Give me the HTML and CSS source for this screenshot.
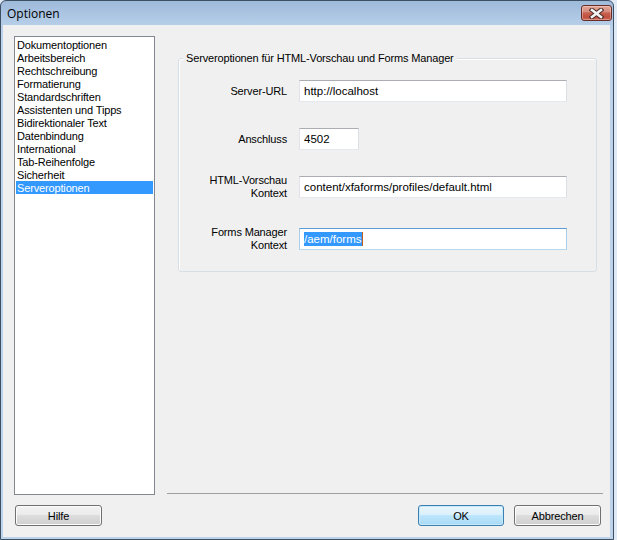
FILE: index.html
```html
<!DOCTYPE html>
<html lang="de">
<head>
    <meta charset="UTF-8">
    <title>Optionen</title>
    <link rel="stylesheet" href="styles.css">
</head>
<body>
    <div class="window">
        <div class="titlebar">
            <span class="title">Optionen</span>
            <button class="close-btn">
                <svg width="15" height="11" viewBox="0 0 15 11">
                    <path d="M3 2 L12 9 M12 2 L3 9" stroke="#4a2a26" stroke-width="4.6" stroke-linecap="square" fill="none"/>
                    <path d="M3 2 L12 9 M12 2 L3 9" stroke="#f4f4f4" stroke-width="2.6" stroke-linecap="square" fill="none"/>
                </svg>
            </button>
        </div>
        <div class="client">
            <div class="main">
                <ul class="category-list">
                    <li>Dokumentoptionen</li>
                    <li>Arbeitsbereich</li>
                    <li>Rechtschreibung</li>
                    <li>Formatierung</li>
                    <li>Standardschriften</li>
                    <li>Assistenten und Tipps</li>
                    <li>Bidirektionaler Text</li>
                    <li>Datenbindung</li>
                    <li>International</li>
                    <li>Tab-Reihenfolge</li>
                    <li>Sicherheit</li>
                    <li class="selected">Serveroptionen</li>
                </ul>
                <div class="panel">
                    <div class="group">
                        <span class="group-title">Serveroptionen für HTML-Vorschau und Forms Manager</span>
                        <div class="form-list">
                            <div class="form-row">
                                <label class="field-label">Server-URL</label>
                                <div class="field">http://localhost</div>
                            </div>
                            <div class="form-row">
                                <label class="field-label">Anschluss</label>
                                <div class="field short">4502</div>
                            </div>
                            <div class="form-row">
                                <label class="field-label">HTML-Vorschau<br>Kontext</label>
                                <div class="field">content/xfaforms/profiles/default.html</div>
                            </div>
                            <div class="form-row spaced">
                                <label class="field-label">Forms Manager<br>Kontext</label>
                                <div class="field focused"><span class="selection">/aem/forms</span><span class="caret"></span></div>
                            </div>
                        </div>
                    </div>
                    <div class="separator"></div>
                </div>
            </div>
            <div class="button-row">
                <button class="btn help-btn">Hilfe</button>
                <button class="btn default-btn">OK</button>
                <button class="btn cancel-btn">Abbrechen</button>
            </div>
        </div>
    </div>
</body>
</html>
```

FILE: styles.css
```css
body {
    margin: 0;
    background: #dfeaf6;
    font-family: "Liberation Sans", Arial, sans-serif;
    font-size: 11px;
    letter-spacing: -0.15px;
    color: #000;
}
.window {
    width: 614px;
    height: 540px;
    box-sizing: border-box;
    border: 1px solid #3d4f63;
    border-radius: 6px 6px 0 0;
    background: linear-gradient(#9ebada, #b6cee8 24px, #bcd3eb 30px, #bcd3eb);
    display: flex;
    flex-direction: column;
}
.titlebar {
    height: 24px;
    display: flex;
    justify-content: space-between;
    align-items: flex-start;
}
.title {
    font-family: "Open Sans", "Liberation Sans", sans-serif;
    font-size: 12px;
    letter-spacing: 0;
    line-height: 17px;
    padding: 4px 0 0 6px;
}
.close-btn {
    width: 31px;
    height: 16px;
    margin: 4px 1px 0 0;
    padding: 0;
    border: 1px solid #6a2b24;
    border-radius: 3px;
    background: linear-gradient(#e3a697, #d68c7e 40%, #c9604f 50%, #c05040 80%, #cc6a57);
    box-shadow: inset 0 0 0 1px rgba(255, 255, 255, 0.3);
    display: flex;
    justify-content: center;
    align-items: center;
}
.client {
    flex: 1;
    margin: 0 3px 2px 2px;
    background: #f0f0f0;
    padding: 11px 7px 11px 11px;
    display: flex;
    flex-direction: column;
}
.main {
    height: 459px;
    display: flex;
}
.category-list {
    width: 141px;
    box-sizing: border-box;
    margin: 0;
    padding: 1px 0 0 0;
    list-style: none;
    background: #fff;
    border: 1px solid #828790;
}
.category-list li {
    height: 13px;
    line-height: 14px;
    margin: 0 1px;
    padding-left: 1px;
    white-space: nowrap;
}
.category-list li.selected {
    background: #3399ff;
    color: #fff;
}
.panel {
    flex: 1;
    margin-left: 12px;
    display: flex;
    flex-direction: column;
}
.group {
    position: relative;
    margin: 22px 6px 0 11px;
    padding: 19px 0;
    border: 1px solid #d5dfe5;
    border-radius: 3px;
    box-shadow: inset 1px 1px 0 #fff;
}
.group-title {
    position: absolute;
    top: -7px;
    left: 4px;
    padding: 0 3px;
    line-height: 13px;
    background: #f0f0f0;
    white-space: nowrap;
}
.form-list {
    display: flex;
    flex-direction: column;
    gap: 22px;
}
.form-row {
    height: 26px;
    display: flex;
    align-items: center;
    gap: 12px;
}
.form-row.spaced {
    margin-top: 4px;
}
.field-label {
    width: 108px;
    text-align: right;
    line-height: 13px;
}
.field {
    width: 268px;
    height: 22px;
    box-sizing: border-box;
    padding-left: 4px;
    line-height: 20px;
    font-size: 11.5px;
    letter-spacing: 0;
    background: #fff;
    border: 1px solid;
    border-color: #abadb3 #dbdfe6 #e3e9ef #e2e3ea;
    white-space: nowrap;
    display: flex;
    align-items: center;
}
.field.short {
    width: 60px;
}
.field.focused {
    border-color: #5b9bd6 #a9cdec #b7d9ed #a9cdec;
}
.selection {
    background: #3399ff;
    color: #fff;
    line-height: 14px;
}
.caret {
    width: 1px;
    height: 14px;
    background: #c0601c;
}
.separator {
    margin-top: auto;
    margin-bottom: 1px;
    border-top: 1px solid #a0a0a0;
}
.button-row {
    margin-top: 10px;
    display: flex;
    gap: 10px;
}
.btn {
    height: 21px;
    padding: 0;
    font-family: "Liberation Sans", Arial, sans-serif;
    font-size: 11px;
    letter-spacing: -0.15px;
    color: #000;
    border: 1px solid #707070;
    border-radius: 3px;
    background: linear-gradient(#f2f2f2, #ebebeb 50%, #dddddd 50%, #cfcfcf);
    box-shadow: inset 0 0 0 1px #fcfcfc;
}
.help-btn {
    width: 87px;
    margin-left: 1px;
    margin-right: auto;
}
.default-btn {
    width: 86px;
    border-color: #3c7fb1;
    background: linear-gradient(#eaf6fd, #d9f0fc 50%, #bee6fd 50%, #a7d9f5);
    box-shadow: inset 0 0 0 1px #c6e9fd;
}
.cancel-btn {
    width: 87px;
    margin-right: 2px;
}
```
